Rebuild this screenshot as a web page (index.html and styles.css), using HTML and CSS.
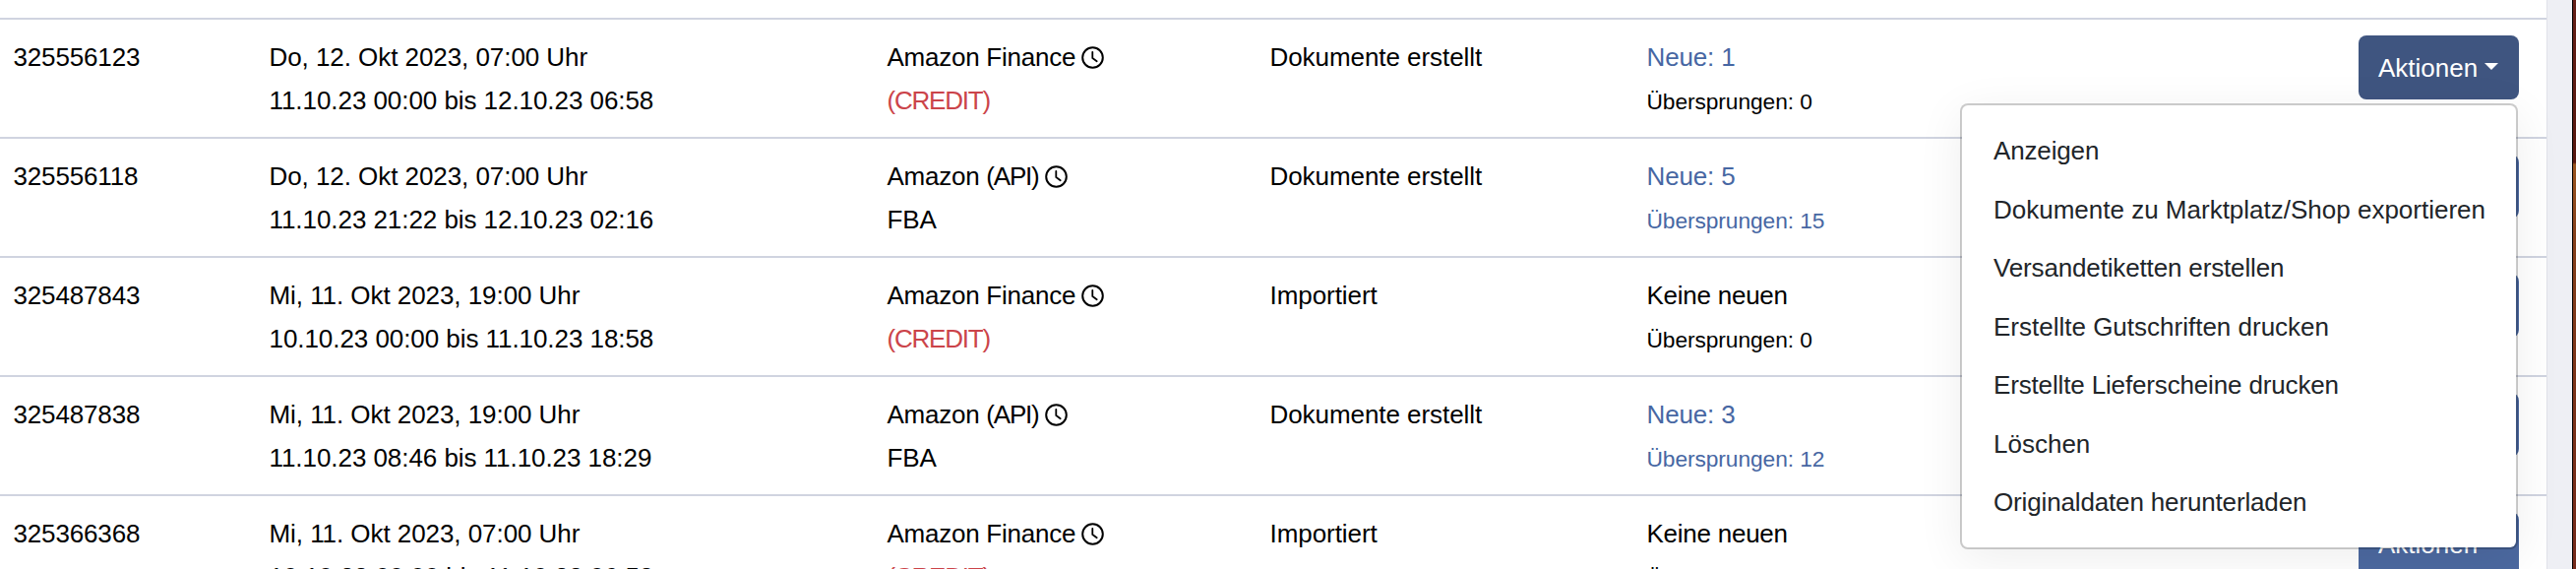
FILE: index.html
```
<!DOCTYPE html>
<html lang="de">
<head>
<meta charset="utf-8">
<title>Importe</title>
<link rel="stylesheet" href="styles.css">
</head>
<body>
<svg class="defs" aria-hidden="true"><symbol id="clock" viewBox="0 0 23 23"><circle cx="11.5" cy="11.5" r="10.3" fill="none" stroke="currentColor" stroke-width="2"/><path d="M11.3 5.8v6.2l4.4 3.2" fill="none" stroke="currentColor" stroke-width="1.8" stroke-linecap="round" stroke-linejoin="round"/></symbol></svg>
<div class="page">
<main class="panel">
  <div class="row">
    <div class="id">325556123</div>
    <div>Do, 12. Okt 2023, 07:00 Uhr<br>11.10.23 00:00 bis 12.10.23 06:58</div>
    <div><span class="source">Amazon Finance</span><svg class="clock"><use href="#clock"/></svg><br><span class="credit">(CREDIT)</span></div>
    <div>Dokumente erstellt</div>
    <div><a>Neue: 1</a><br><small>Übersprungen: 0</small></div>
    <div class="actions"><button class="btn open">Aktionen</button>
      <ul class="menu">
        <li class="tight">Anzeigen</li>
        <li>Dokumente zu Marktplatz/Shop exportieren</li>
        <li class="tight">Versandetiketten erstellen</li>
        <li>Erstellte Gutschriften drucken</li>
        <li class="tight">Erstellte Lieferscheine drucken</li>
        <li>Löschen</li>
        <li class="tight">Originaldaten herunterladen</li>
      </ul>
    </div>
  </div>
  <div class="row">
    <div class="id">325556118</div>
    <div>Do, 12. Okt 2023, 07:00 Uhr<br>11.10.23 21:22 bis 12.10.23 02:16</div>
    <div><span class="source">Amazon <span class="api">(API)</span></span><svg class="clock"><use href="#clock"/></svg><br>FBA</div>
    <div>Dokumente erstellt</div>
    <div><a>Neue: 5</a><br><small><a>Übersprungen: 15</a></small></div>
    <div class="actions"><button class="btn">Aktionen</button></div>
  </div>
  <div class="row">
    <div class="id">325487843</div>
    <div>Mi, 11. Okt 2023, 19:00 Uhr<br>10.10.23 00:00 bis 11.10.23 18:58</div>
    <div><span class="source">Amazon Finance</span><svg class="clock"><use href="#clock"/></svg><br><span class="credit">(CREDIT)</span></div>
    <div>Importiert</div>
    <div><span class="source">Keine neuen</span><br><small>Übersprungen: 0</small></div>
    <div class="actions"><button class="btn">Aktionen</button></div>
  </div>
  <div class="row">
    <div class="id">325487838</div>
    <div>Mi, 11. Okt 2023, 19:00 Uhr<br>11.10.23 08:46 bis 11.10.23 18:29</div>
    <div><span class="source">Amazon <span class="api">(API)</span></span><svg class="clock"><use href="#clock"/></svg><br>FBA</div>
    <div>Dokumente erstellt</div>
    <div><a>Neue: 3</a><br><small><a>Übersprungen: 12</a></small></div>
    <div class="actions"><button class="btn">Aktionen</button></div>
  </div>
  <div class="row">
    <div class="id">325366368</div>
    <div>Mi, 11. Okt 2023, 07:00 Uhr<br>10.10.23 00:00 bis 11.10.23 06:58</div>
    <div><span class="source">Amazon Finance</span><svg class="clock"><use href="#clock"/></svg><br><span class="credit">(CREDIT)</span></div>
    <div>Importiert</div>
    <div><span class="source">Keine neuen</span><br><small>Übersprungen: 0</small></div>
    <div class="actions"><button class="btn">Aktionen</button></div>
  </div>
</main>
<div class="gutter"></div>
<div class="desktop"></div>
</div>
</body>
</html>
```
FILE: styles.css
```
* { box-sizing: border-box; }
body {
  margin: 0;
  height: 578px;
  overflow: hidden;
  font: 26px/44px "Helvetica Neue", "Liberation Sans", Arial, sans-serif;
  color: #000;
}
.defs { display: none; }
.page { display: flex; height: 578px; overflow: hidden; }
.panel { width: 2588px; padding-top: 18px; background: #fff; }
.gutter { width: 26px; background: #eeeff4; border-left: 1px solid #e0e2e9; }
.desktop {
  width: 4px;
  border-left: 1px solid #000;
  background: linear-gradient(#651f17, #56170f 165px, #9a5520 167px, #85401c 240px, #7c3419 380px, #74291a);
}
.row {
  display: grid;
  grid-template-columns: 260px 628px 389px 383px 1fr 163px;
  height: 121px;
  padding: 16px 28px 0 13.5px;
  border-top: 2px solid #d0d4e0;
  letter-spacing: -.06px;
  white-space: nowrap;
}
.row > div { margin-top: -.5px; }
.row > .id { letter-spacing: -.15px; }
.row > .actions { position: relative; margin-top: 0; letter-spacing: 0; }
a { color: #4767a3; letter-spacing: -.15px; }
small, small a { font-size: 22.75px; letter-spacing: -.08px; }
.source { letter-spacing: -.25px; }
.credit { color: #cb444a; letter-spacing: -1.2px; }
.api { letter-spacing: -1.2px; }
.clock { width: 23px; height: 23px; margin-left: 6px; vertical-align: -3px; }
.btn {
  display: flex;
  align-items: center;
  width: 163px;
  height: 65px;
  padding: 0 0 0 20px;
  border: 0;
  border-radius: 8px;
  background: #4c69a0;
  color: #fff;
  font: inherit;
}
.btn.open { background: #3f5580; }
.btn::after {
  content: "";
  margin: -3px 0 0 7px;
  border: 7px solid transparent;
  border-top-color: #fff;
  border-bottom: 0;
}
.menu {
  position: absolute;
  z-index: 1;
  top: 69px;
  right: 1px;
  width: 567px;
  height: 453px;
  margin: 0;
  padding: 17px 32px;
  border: 2px solid rgba(0, 0, 0, .2);
  border-radius: 8px;
  background: #fff;
  background-clip: padding-box;
  box-shadow: 0 10px 48px rgba(0, 0, 0, .07);
  color: #212529;
  list-style: none;
  line-height: 59.5px;
}
.tight { letter-spacing: -.15px; }
```
